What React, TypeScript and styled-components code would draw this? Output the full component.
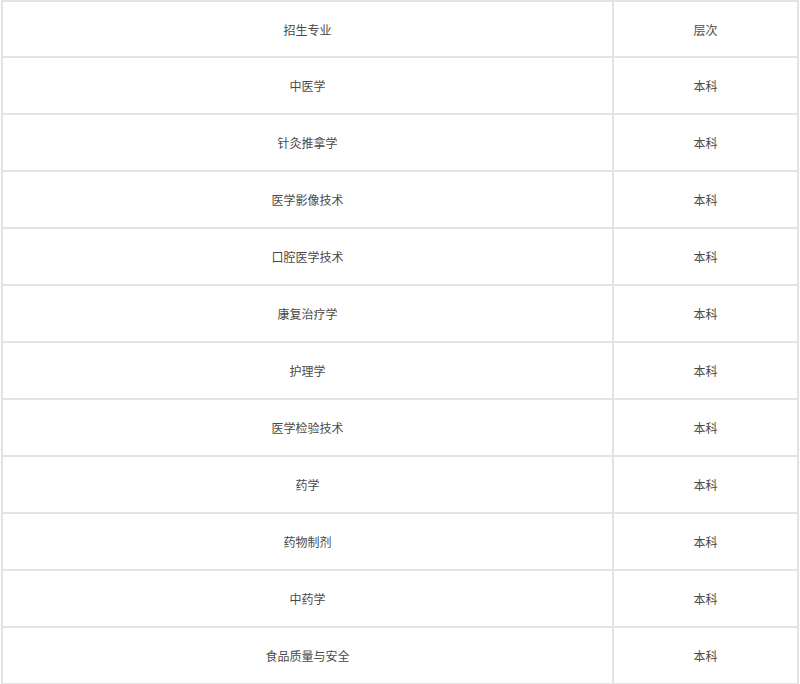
import React from 'react';
import styled, { createGlobalStyle } from 'styled-components';

const GlobalStyle = createGlobalStyle`
    html, body {
        margin: 0;
        padding: 0;
        background: #fff;
    }
    body {
        font-family: "Microsoft YaHei", "Noto Sans CJK SC", "Noto Sans", sans-serif;
    }
`;

const Table = styled.table`
    width: 798px;
    margin: 0 0 0 1px;
    border-collapse: collapse;
    border: 2px solid #e3e3e3;
    table-layout: fixed;
`;

const Cell = styled.td<{ $width?: string; $head?: boolean }>`
    width: ${(props) => props.$width || 'auto'};
    height: ${(props) => (props.$head ? '54px' : '55px')};
    border: 2px solid #e3e3e3;
    text-align: center;
    vertical-align: middle;
    font-size: 12px;
    color: #4a4a4a;
    padding: 0;
`;

const majors = [
    '中医学',
    '针灸推拿学',
    '医学影像技术',
    '口腔医学技术',
    '康复治疗学',
    '护理学',
    '医学检验技术',
    '药学',
    '药物制剂',
    '中药学',
    '食品质量与安全',
];

const App: React.FC = () => {
    return (
        <>
            <GlobalStyle />
            <Table>
                <tbody>
                    <tr>
                        <Cell $head $width="609px">招生专业</Cell>
                        <Cell $head>层次</Cell>
                    </tr>
                    {majors.map((m) => (
                        <tr key={m}>
                            <Cell>{m}</Cell>
                            <Cell>本科</Cell>
                        </tr>
                    ))}
                </tbody>
            </Table>
        </>
    );
};

export default App;
